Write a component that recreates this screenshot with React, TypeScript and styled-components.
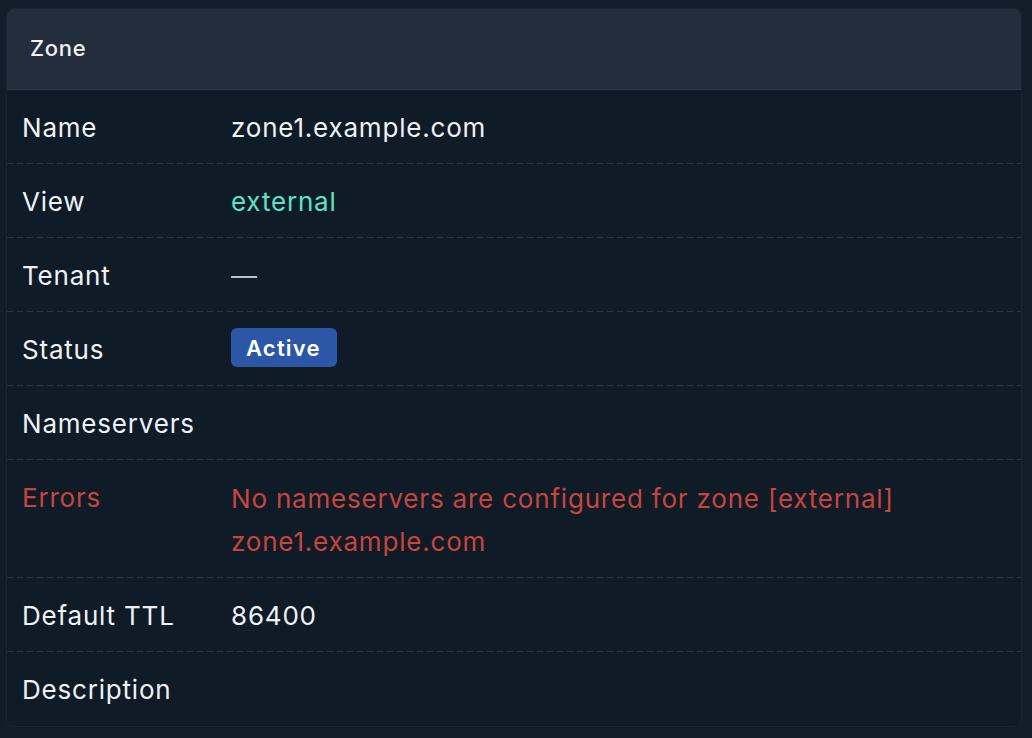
import React from "react";
import styled, { createGlobalStyle } from "styled-components";

const Global = createGlobalStyle`
  html, body { margin: 0; padding: 0; background: #131d29; }
  body { font-family: "Inter", "Noto Sans", sans-serif; -webkit-font-smoothing: antialiased; }
`;

const Page = styled.div`
  padding: 8px 10px 14px 6px;
  min-height: 738px;
  box-sizing: border-box;
`;

const Card = styled.section`
  background: #0f1b27;
  border: 1px solid #1a2533;
  border-radius: 8px;
  overflow: hidden;
`;

const Header = styled.header`
  background: #242d3c;
  height: 81px;
  display: flex;
  align-items: center;
  padding: 0 23px 3px;
  box-sizing: border-box;
  border-bottom: 1px solid #2b3646;
  font-size: 22px;
  font-weight: 500;
  letter-spacing: 0.7px;
  color: #eef1f5;
`;

const Row = styled.div<{ $last?: boolean }>`
  display: grid;
  grid-template-columns: 209px 1fr;
  padding: 17px 15px 15px;
  font-size: 26px;
  letter-spacing: 0.8px;
  line-height: 42px;
  color: #eef1f5;
  background-image: ${(p) =>
    p.$last
      ? "none"
      : "repeating-linear-gradient(to right, #2a3646 0 6px, transparent 6px 10px)"};
  background-size: 100% 1px;
  background-position: left bottom;
  background-repeat: no-repeat;
`;

const Label = styled.div<{ $tone?: "error" }>`
  color: ${(p) => (p.$tone === "error" ? "#c8453d" : "#eef1f5")};
`;

const Value = styled.div<{ $tone?: "accent" | "error" | "muted" }>`
  line-height: ${(p) => (p.$tone === "error" ? "43px" : "42px")};
  color: ${(p) =>
    p.$tone === "accent"
      ? "#5fe3c6"
      : p.$tone === "error"
      ? "#c8453d"
      : p.$tone === "muted"
      ? "#b9c0c9"
      : "#eef1f5"};
`;

const Badge = styled.span`
  display: inline-flex;
  align-items: center;
  height: 39px;
  padding: 0 16px 0 15px;
  margin-top: -1px;
  border-radius: 6px;
  background: #2b57a6;
  color: #ffffff;
  font-size: 22px;
  font-weight: 600;
  letter-spacing: 1.2px;
  line-height: 1;
  vertical-align: top;
`;

type Item = {
  label: string;
  value?: React.ReactNode;
  tone?: "accent" | "error" | "muted";
};

const items: Item[] = [
  { label: "Name", value: "zone1.example.com" },
  { label: "View", value: "external", tone: "accent" },
  { label: "Tenant", value: "—", tone: "muted" },
  { label: "Status", value: <Badge>Active</Badge> },
  { label: "Nameservers" },
  {
    label: "Errors",
    tone: "error",
    value: (
      <>
        No nameservers are configured for zone [external]
        <br />
        zone1.example.com
      </>
    ),
  },
  { label: "Default TTL", value: "86400" },
  { label: "Description" },
];

export default function App() {
  return (
    <>
      <Global />
      <Page>
        <Card>
          <Header>Zone</Header>
          {items.map((it, i) => (
            <Row key={it.label} $last={i === items.length - 1}>
              <Label $tone={it.tone === "error" ? "error" : undefined}>{it.label}</Label>
              <Value $tone={it.tone}>{it.value}</Value>
            </Row>
          ))}
        </Card>
      </Page>
    </>
  );
}
